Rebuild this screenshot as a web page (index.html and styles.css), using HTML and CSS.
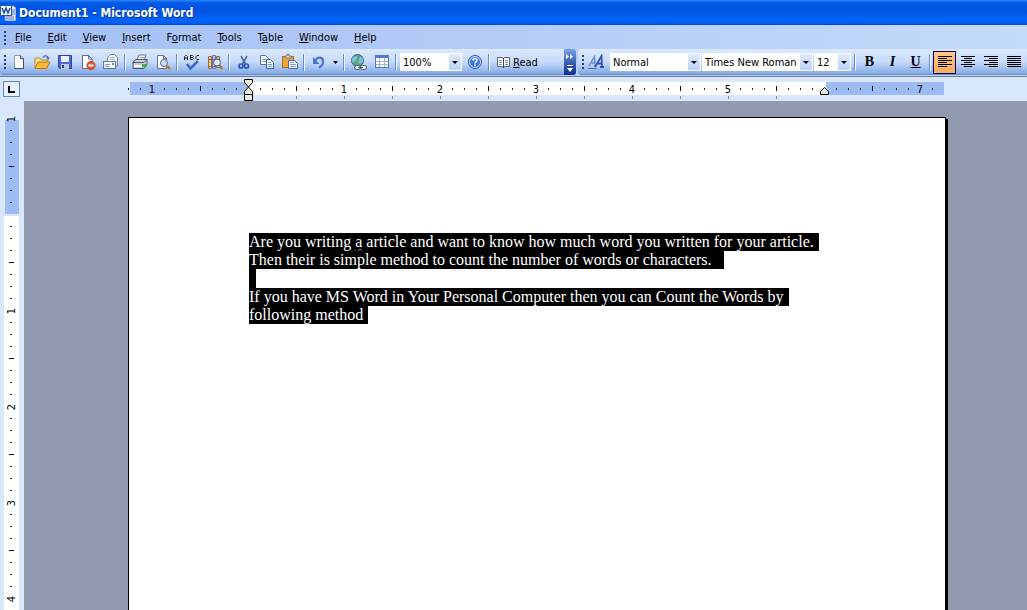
FILE: index.html
```html
<!DOCTYPE html>
<html lang="en">
<head>
    <meta charset="UTF-8">
    <meta name="viewport" content="width=device-width, initial-scale=1.0">
    <title>Document1 - Microsoft Word</title>
    <link rel="stylesheet" href="styles.css">
</head>
<body>
    <header class="titlebar">
        <svg class="app-icon" width="16" height="16" viewBox="0 0 16 16">
            <path d="M5 1h9l2 2v13H5z" fill="#dfe8fa" stroke="#6f8fd0"/>
            <path d="M12 5h3M12 7h3M12 9h3M6 12h8M6 14h8" stroke="#5b7cc0"/>
            <rect x="0.5" y="0.5" width="11" height="10" fill="#fff" stroke="#2b57ae"/>
            <path d="M2 3l2 5 2-5 2 5 2-5" fill="none" stroke="#1f4aa8" stroke-width="1.5"/>
        </svg>
        <h1>Document1 - Microsoft Word</h1>
    </header>

    <nav class="menubar">
        <span class="grip"></span>
        <button><u>F</u>ile</button>
        <button><u>E</u>dit</button>
        <button><u>V</u>iew</button>
        <button><u>I</u>nsert</button>
        <button>F<u>o</u>rmat</button>
        <button><u>T</u>ools</button>
        <button>T<u>a</u>ble</button>
        <button><u>W</u>indow</button>
        <button><u>H</u>elp</button>
    </nav>

    <div class="toolbars">
        <div class="toolbar standard">
            <span class="grip"></span>
            <button class="tool" aria-label="New">
                <svg width="16" height="16" viewBox="0 0 16 16">
                    <path d="M3.5 1.5h6l3 3v10h-9z" fill="#fff" stroke="#8a9cc0"/>
                    <path d="M9.5 1.5v3h3v10h-9" fill="none" stroke="#3c4d78"/>
                </svg>
            </button>
            <button class="tool" aria-label="Open">
                <svg width="16" height="16" viewBox="0 0 16 16">
                    <path d="M1 14V4h5l1.5 2H13v3" fill="#ffe08a" stroke="#c08a20"/>
                    <path d="M1 14.5L4 8h12l-3.5 6.5z" fill="#fbb73a" stroke="#b9780f"/>
                    <path d="M9 3.5c2-2.5 4.5-2 5 .5" fill="none" stroke="#4a7ac4" stroke-width="1.5"/>
                    <path d="M12 3.5h4l-2 3z" fill="#4a7ac4"/>
                </svg>
            </button>
            <button class="tool" aria-label="Save">
                <svg width="16" height="16" viewBox="0 0 16 16">
                    <path d="M1.5 1.5h13v13h-12l-1-1z" fill="#5068d0" stroke="#3040a0"/>
                    <rect x="4" y="2" width="8" height="6" fill="#e8efff"/>
                    <rect x="4" y="10" width="8" height="5" fill="#c3c9dd"/>
                    <rect x="5" y="11" width="2" height="3" fill="#2c3a90"/>
                </svg>
            </button>
            <button class="tool" aria-label="Permission">
                <svg width="16" height="16" viewBox="0 0 16 16">
                    <path d="M2.5 1.5h6l3.500 3.500v9.500H2.500z" fill="#fff" stroke="#53679a"/>
                    <path d="M8.5 1.5v3.500H12" fill="none" stroke="#53679a"/>
                    <circle cx="11" cy="11.5" r="4.2" fill="#e2502c" stroke="#b23310" stroke-width=".6"/>
                    <rect x="8.5" y="10.5" width="5" height="2" fill="#fff"/>
                </svg>
            </button>
            <button class="tool" aria-label="E-mail">
                <svg width="16" height="16" viewBox="0 0 16 16">
                    <path d="M4.5 7V3.500l3-3h4l3 3V12h-2" fill="#f7faff" stroke="#7485a8"/>
                    <path d="M7 3.500h5M7 5.500h5" stroke="#a8b4cc"/>
                    <rect x=".5" y="7.5" width="12" height="7" fill="#f4f7fd" stroke="#65769b"/>
                    <path d="M2 10.500h5M2 12.500h4" stroke="#8d9bb8"/>
                    <rect x="9" y="9" width="2" height="2" fill="#7788bb"/>
                </svg>
            </button>
            <span class="sep"></span>
            <button class="tool" aria-label="Print">
                <svg width="16" height="16" viewBox="0 0 16 16">
                    <path d="M5 6l2-5h7l-2 6z" fill="#fff" stroke="#6a7590"/>
                    <path d="M7.5 3.500h5M7 5.500h5" stroke="#95a0b8"/>
                    <path d="M1 8l3-2.500h11V11l-3 3.500H1z" fill="#c9cfda" stroke="#4b566c"/>
                    <path d="M1 8.500h11l3-3" fill="none" stroke="#4b566c"/>
                    <rect x="2" y="11" width="9" height="2" fill="#f8f8f8"/>
                    <rect x="10" y="10" width="4" height="3" fill="#35ba3a"/>
                </svg>
            </button>
            <button class="tool" aria-label="Print Preview">
                <svg width="16" height="16" viewBox="0 0 16 16">
                    <path d="M2.5 1.5h6l3 3v10h-9z" fill="#fff" stroke="#60709a"/>
                    <path d="M8.5 1.5v3h3" fill="none" stroke="#60709a"/>
                    <circle cx="9" cy="9" r="3.5" fill="#cde2fa" stroke="#536b94"/>
                    <path d="M12 12l3 3" stroke="#b18420" stroke-width="2.5"/>
                </svg>
            </button>
            <span class="sep"></span>
            <button class="tool" aria-label="Spelling and Grammar">
                <svg width="18" height="17" viewBox="0 0 18 17">
                    <path d="M1.500 6V2.500l1-1h1l1 1V6M1.500 4h3M7.500 1v4.500h2l1-1-1-1h-2M7.500 1.500h2l1 1-1 1M16 1.500h-2l-1 1v2l1 1h2" fill="none" stroke="#222"/>
                    <path d="M4 10l3.500 4.500L15 7" fill="none" stroke="#3b6bc8" stroke-width="2.5"/>
                </svg>
            </button>
            <button class="tool" aria-label="Research">
                <svg width="16" height="16" viewBox="0 0 16 16">
                    <path d="M1.5 2.500h3v12h-3z" fill="#f0c878" stroke="#9b7330"/>
                    <path d="M5.5 1.5h3v13h-3z" fill="#c9bcee" stroke="#7a6cb0"/>
                    <path d="M9.5 2.500h3v11h-3z" fill="#d8c48c" stroke="#8a7440"/>
                    <path d="M1 5.500h12M1 12.500h8" stroke="#6d609d"/>
                    <circle cx="10" cy="8.500" r="3.5" fill="#d8eafa" stroke="#4a6088"/>
                    <path d="M12.500 11.500l3 3.500" stroke="#a87b20" stroke-width="2.200"/>
                </svg>
            </button>
            <span class="sep"></span>
            <button class="tool" aria-label="Cut">
                <svg width="16" height="16" viewBox="0 0 16 16">
                    <path d="M5 2l4.500 8M11 2L6.500 10" stroke="#4e6a9c" stroke-width="1.6"/>
                    <circle cx="5" cy="12" r="2" fill="none" stroke="#2954b8" stroke-width="1.7"/>
                    <circle cx="10.500" cy="12" r="2" fill="none" stroke="#2954b8" stroke-width="1.7"/>
                </svg>
            </button>
            <button class="tool" aria-label="Copy">
                <svg width="16" height="16" viewBox="0 0 16 16">
                    <path d="M1.5 1.5h5l3 3v6h-8z" fill="#fff" stroke="#5572ad"/>
                    <path d="M3 5.500h4M3 7.500h4" stroke="#7c9ad8"/>
                    <path d="M7.5 5.500h4l3 3v6h-7z" fill="#fff" stroke="#3f5c9d"/>
                    <path d="M9 8.500h3M9 10.500h4M9 12.500h4" stroke="#6d8fd5"/>
                </svg>
            </button>
            <button class="tool" aria-label="Paste">
                <svg width="16" height="16" viewBox="0 0 16 16">
                    <rect x=".5" y="2.500" width="11" height="11" fill="#eda63b" stroke="#a96d18"/>
                    <path d="M3 4V2h2V.5h2V2h2v2z" fill="#e9e1c9" stroke="#777"/>
                    <path d="M6.500 6.500h6l3 3v5h-9z" fill="#fff" stroke="#4c67a5"/>
                    <path d="M8 8.500h4M8 10.500h6M8 12.500h6" stroke="#7c9ad8"/>
                </svg>
            </button>
            <span class="sep"></span>
            <button class="tool undo" aria-label="Undo">
                <svg width="16" height="16" viewBox="0 0 16 16">
                    <path d="M4.500 6.500C7 2 12.500 3 12 8c-.2 2.500-1.500 4.500-4 5.500" fill="none" stroke="#4a72d2" stroke-width="2.200"/>
                    <path d="M2 3v7h6.500z" fill="#4a72d2"/>
                </svg>
                <svg class="arrow" width="5" height="3" viewBox="0 0 5 3"><path d="M0 0h5L2.5 3z"/></svg>
            </button>
            <span class="sep"></span>
            <button class="tool" aria-label="Insert Hyperlink">
                <svg width="17" height="17" viewBox="0 0 17 17">
                    <circle cx="7.500" cy="6.500" r="6" fill="#58a96a" stroke="#36628c"/>
                    <path d="M3 3c3-2 5 0 4 2S4 8 3 9C1 7 1.500 5 3 3zM10 3l3 1v4l-3 2-2-2z" fill="#83b8e8"/>
                    <rect x="4.500" y="11.500" width="6" height="4" rx="2" fill="#f0f3fa" stroke="#495770"/>
                    <rect x="10.500" y="11.500" width="6" height="4" rx="2" fill="#f0f3fa" stroke="#495770"/>
                    <path d="M8 13.500h5" stroke="#495770"/>
                </svg>
            </button>
            <button class="tool" aria-label="Insert Table">
                <svg width="16" height="16" viewBox="0 0 16 16">
                    <rect x="1.500" y="1.500" width="13" height="12" fill="#fff" stroke="#5875b5"/>
                    <rect x="1" y="1" width="14" height="3" fill="#5379cf"/>
                    <path d="M5.500 4v9M10.500 4v9M2 7.500h12M2 10.500h12" stroke="#a3b4d8"/>
                </svg>
            </button>
            <span class="sep"></span>
            <label class="combo zoom">
                <select aria-label="Zoom"><option>100%</option></select>
                <span class="drop"></span>
            </label>
            <button class="tool" aria-label="Help">
                <svg width="16" height="16" viewBox="0 0 16 16">
                    <circle cx="8" cy="8" r="6.500" fill="#3d76dc" stroke="#2855ae"/>
                    <circle cx="8" cy="8" r="5.500" fill="none" stroke="#d5e5ff"/>
                    <path d="M6 6.500C6 4 10 4 10 6.300 10 8 8 7.800 8 9.500M8 10.500V12" fill="none" stroke="#fff" stroke-width="1.500"/>
                </svg>
            </button>
            <span class="sep"></span>
            <button class="read">
                <svg width="15" height="13" viewBox="0 0 15 13">
                    <path d="M1.500 1.500h4.500l1.500 1L9 1.500h4.500v9H9l-1.500 1-1.500-1H1.500z" fill="#fff" stroke="#536078"/>
                    <path d="M7.500 2v10" stroke="#384358"/>
                    <path d="M3 4.500h3M3 6.500h3M3 8.500h3M9 4.500h3M9 6.500h3M9 8.500h3" stroke="#8a96ad"/>
                </svg>
                <span><u>R</u>ead</span>
            </button>
            <button class="more" aria-label="Toolbar Options">
                <svg width="12" height="23" viewBox="0 0 12 23">
                    <path d="M2 3l3 2.500L2 8zM6 3l3 2.500L6 8z" fill="#fff"/>
                    <path d="M3 14.500h6" stroke="#fff"/>
                    <path d="M3 17h6l-3 4z" fill="#fff"/>
                </svg>
            </button>
        </div>

        <div class="toolbar formatting">
            <span class="grip"></span>
            <button class="tool" aria-label="Styles and Formatting">
                <svg width="17" height="16" viewBox="0 0 17 16">
                    <path d="M1 12L6.500 2.500 7 12M3 9h4" fill="none" stroke="#6f8fd0" stroke-width="1.500"/>
                    <path d="M7 13L13.500 2l.5 11M9 9.500h5M12 13h4" fill="none" stroke="#3355ae" stroke-width="1.800"/>
                    <path d="M0 14.500h9" stroke="#7861b5"/>
                </svg>
            </button>
            <label class="combo style">
                <select aria-label="Style"><option>Normal</option></select>
                <span class="drop"></span>
            </label>
            <label class="combo font">
                <select aria-label="Font"><option>Times New Roman</option></select>
                <span class="drop"></span>
            </label>
            <label class="combo size">
                <select aria-label="Font Size"><option>12</option></select>
                <span class="drop"></span>
            </label>
            <span class="sep"></span>
            <button class="tool letter"><b>B</b></button>
            <button class="tool letter"><i>I</i></button>
            <button class="tool letter"><u>U</u></button>
            <span class="sep"></span>
            <button class="tool active" aria-label="Align Left">
                <svg width="14" height="12" viewBox="0 0 14 12"><path d="M0 .5h14M0 2.500h9M0 4.500h14M0 6.500h9M0 8.500h14M0 10.500h9" stroke="#000"/></svg>
            </button>
            <button class="tool" aria-label="Center">
                <svg width="14" height="12" viewBox="0 0 14 12"><path d="M0 .5h14M3 2.500h8M0 4.500h14M3 6.500h8M0 8.500h14M3 10.500h8" stroke="#000"/></svg>
            </button>
            <button class="tool" aria-label="Align Right">
                <svg width="14" height="12" viewBox="0 0 14 12"><path d="M0 .5h14M5 2.500h9M0 4.500h14M5 6.500h9M0 8.500h14M5 10.500h9" stroke="#000"/></svg>
            </button>
            <button class="tool" aria-label="Justify">
                <svg width="14" height="12" viewBox="0 0 14 12"><path d="M0 .5h14M0 2.500h14M0 4.500h14M0 6.500h14M0 8.500h14M0 10.500h14" stroke="#000"/></svg>
            </button>
        </div>
    </div>

    <div class="ruler-row">
        <button class="tab-stop" aria-label="Left Tab">
            <svg width="7" height="7" viewBox="0 0 7 7"><path d="M1 0v6h6" fill="none" stroke="#000" stroke-width="2"/></svg>
        </button>
        <svg class="ruler" width="822" height="24" viewBox="0 0 822 24">
            <defs>
                <!-- one inch, starting on the inch mark -->
                <pattern id="inch" x="120" y="0" width="96" height="24" patternUnits="userSpaceOnUse">
                    <path d="M12 11v2M24 11v2M36 11v2M60 11v2M72 11v2M84 11v2" transform="translate(.5)" stroke="#222"/>
                    <path d="M48.500 9v5" stroke="#000"/>
                </pattern>
            </defs>
            <rect x="2" y="5" width="118" height="13" fill="#9ebcf4"/>
            <rect x="120" y="5" width="578" height="13" fill="#fff"/>
            <rect x="698" y="5" width="118" height="13" fill="#9ebcf4"/>
            <rect x="0" y="0" width="814" height="24" fill="url(#inch)"/>
            <g class="numbers">
                <text x="24" y="16">1</text>
                <text x="216" y="16">1</text>
                <text x="312" y="16">2</text>
                <text x="408" y="16">3</text>
                <text x="504" y="16">4</text>
                <text x="600" y="16">5</text>
                <text x="792" y="16">7</text>
            </g>
            <path d="M168.500 19v3M216.500 19v3M264.500 19v3M312.500 19v3M360.500 19v3M408.500 19v3M456.500 19v3M504.500 19v3M552.500 19v3M600.500 19v3M648.500 19v3" stroke="#7b8db5"/>
            <path d="M116.500 2.500h8v3l-4 4.500-4-4.500zM116.500 17.500v-3l4-4.500 4 4.500v3zM116.500 17.500h8v6h-8z" fill="#ece9d8" stroke="#000"/>
            <path d="M692.500 17.500v-3l4-4 4 4v3z" fill="#ece9d8" stroke="#000"/>
        </svg>
    </div>

    <main class="workspace">
        <div class="side-ruler">
            <svg width="24" height="509" viewBox="0 0 24 509">
                <defs>
                    <pattern id="inch-down" x="0" y="17" width="24" height="96" patternUnits="userSpaceOnUse">
                        <path d="M10 12h2M10 24h2M10 36h2M10 60h2M10 72h2M10 84h2" transform="translate(0 .5)" stroke="#222"/>
                        <path d="M9 48.500h5" stroke="#000"/>
                    </pattern>
                </defs>
                <rect x="5" y="19" width="14" height="94" fill="#9ebcf4"/>
                <rect x="4" y="115" width="15" height="394" fill="#fff"/>
                <rect x="0" y="19" width="24" height="490" fill="url(#inch-down)"/>
                <g class="numbers">
                    <text transform="translate(15 18) rotate(-90)">1</text>
                    <text transform="translate(15 210) rotate(-90)">1</text>
                    <text transform="translate(15 306) rotate(-90)">2</text>
                    <text transform="translate(15 402) rotate(-90)">3</text>
                    <text transform="translate(15 498) rotate(-90)">4</text>
                </g>
            </svg>
        </div>
        <div class="desk">
            <article class="page">
                <p><span class="selected">Are you writing <span class="grammar">a</span> article and want to know how much word you written for your article.</span></p>
                <p><span class="selected end">Then their is simple method to count the number of words or characters.</span></p>
                <p class="blank"><span class="selected"></span></p>
                <p><span class="selected">If you have MS Word in Your Personal Computer then you can Count the Words by</span></p>
                <p><span class="selected">following method</span></p>
            </article>
        </div>
    </main>
</body>
</html>
```

FILE: styles.css
```css
* {
    margin: 0;
    padding: 0;
    box-sizing: border-box;
}

body {
    min-height: 100vh;
    display: flex;
    flex-direction: column;
    background: #d8e7fc;
    font-family: 'DejaVu Sans Condensed', 'Noto Sans', sans-serif;
    font-size: 11px;
    color: #000;
    overflow: hidden;
}

button {
    border: none;
    background: none;
    font: inherit;
    color: inherit;
}

svg {
    display: block;
    flex: none;
}

.titlebar {
    display: flex;
    align-items: center;
    gap: 3px;
    height: 25px;
    background: linear-gradient(#2a86f8 0, #0058e6 3px, #0055e0 12px, #0062fa 19px, #0060f5 23px, #0045c8 25px);
}

.titlebar h1 {
    font-size: 12px;
    line-height: 16px;
    color: #fff;
    text-shadow: 1px 1px #0b3594;
}

.menubar {
    display: flex;
    align-items: center;
    height: 24px;
    padding: 2px 0 0 4px;
    background: linear-gradient(90deg, #a3c0f5, #c4dafa);
}

.menubar button {
    padding: 0 8px;
    line-height: 20px;
}

.grip {
    flex: none;
    width: 3px;
    height: 15px;
    background: repeating-linear-gradient(#27417f 0 2px, transparent 2px 4px) no-repeat 0 0 / 2px 15px;
}

.toolbars {
    display: flex;
    height: 28px;
    background: linear-gradient(90deg, #a3c0f5, #c4dafa);
    border-bottom: 1px solid #6b7d88;
}

.toolbar {
    display: flex;
    align-items: center;
    height: 26px;
    background: linear-gradient(#dce9fe, #c5dafb 50%, #86abe6 94%, #5f7fb8);
}

.standard {
    width: 576px;
    padding-left: 4px;
    border-radius: 3px;
}

.formatting {
    flex: 1;
    margin-left: 2px;
    padding-left: 4px;
    border-radius: 3px 0 0 3px;
}

.tool {
    display: flex;
    flex: none;
    align-items: center;
    justify-content: center;
    width: 23px;
    height: 22px;
}

.undo {
    width: 34px;
    gap: 6px;
}

.sep {
    flex: none;
    width: 2px;
    height: 17px;
    margin: 0 2px;
    background: linear-gradient(90deg, #6a8ccb 50%, #f1f6ff 50%);
}

.combo {
    display: flex;
    flex: none;
    height: 18px;
    margin-right: 1px;
    background: #fff;
}

.combo select {
    flex: 1;
    min-width: 0;
    padding-left: 3px;
    border: none;
    background: none;
    appearance: none;
    font: inherit;
    color: inherit;
}

.drop {
    display: flex;
    align-items: center;
    justify-content: center;
    width: 12px;
    margin: 1px;
    background: linear-gradient(#dfeafd, #bcd3f8);
}

.drop::before {
    content: '';
    border: 3px solid transparent;
    border-top-color: #000;
    border-bottom: none;
}

.zoom {
    width: 62px;
    margin-left: 1px;
}

.style {
    width: 91px;
    margin-left: 2px;
}

.font {
    width: 111px;
}

.size {
    width: 37px;
}

.read {
    display: flex;
    align-items: center;
    gap: 2px;
    padding: 0 4px;
}

.more {
    align-self: stretch;
    width: 12px;
    margin-left: auto;
    background: linear-gradient(#7ba2e6, #3a62b4 50%, #0b3189);
    border-radius: 0 3px 3px 0;
}

.letter {
    font-family: 'Liberation Serif', serif;
    font-size: 14px;
    font-weight: bold;
}

.active {
    height: 23px;
    border: 1px solid #000080;
    background: linear-gradient(#ffc98a, #fdad58);
}

.ruler-row {
    display: flex;
    align-items: center;
    height: 24px;
}

.tab-stop {
    display: flex;
    align-items: center;
    justify-content: center;
    width: 17px;
    height: 16px;
    margin-left: 3px;
    border: 1px solid #5f86c8;
    background: #e8f1fe;
}

.ruler {
    margin-left: 108px;
}

.numbers text {
    font-size: 11px;
    text-anchor: middle;
}

.workspace {
    flex: 1;
    display: flex;
}

.side-ruler {
    width: 24px;
}

.desk {
    flex: 1;
    display: flex;
    padding: 16px 0 0 104px;
    background: #9099ae;
}

.page {
    flex: none;
    width: 818px;
    padding: 115px 120px 0;
    border: 1px solid #000;
    border-bottom: none;
    background: #fff;
    box-shadow: 2px 2px #000;
    font-family: 'Liberation Serif', serif;
    font-size: 16px;
    line-height: 18px;
}

.page p {
    display: flex;
    white-space: nowrap;
}

.selected {
    padding-right: 5px;
    background: #000;
    color: #fff;
}

.end {
    padding-right: 12px;
}

.blank {
    height: 19px;
}

.blank .selected {
    width: 7px;
}

.grammar {
    text-decoration: underline wavy #c080c8 1px;
    text-underline-offset: 1px;
}
```
